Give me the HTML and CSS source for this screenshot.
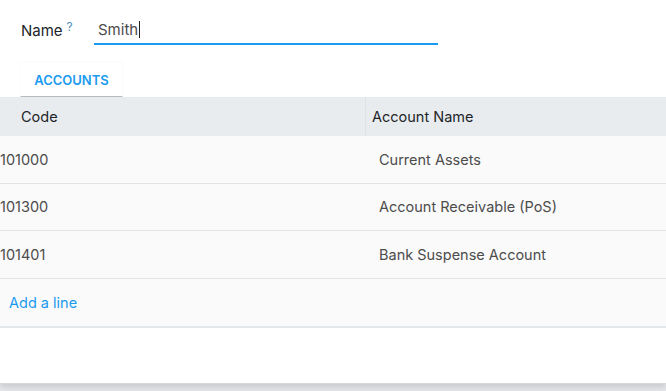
FILE: index.html
```html
<!DOCTYPE html>
<html lang="en">
<head>
    <meta charset="UTF-8">
    <title>Account Group</title>
    <link rel="stylesheet" href="styles.css">
</head>
<body>

<div class="sheet">
    <div class="field-row">
        <label class="field-label">Name<sup class="help">?</sup></label>
        <div class="field-input">Smith<span class="caret"></span></div>
    </div>

    <div class="tabs">
        <div class="tab active">ACCOUNTS</div>
    </div>

    <div class="list">
        <div class="list-row list-head">
            <div class="cell code">Code</div>
            <div class="cell name">Account Name</div>
        </div>
        <div class="list-row">
            <div class="cell code">101000</div>
            <div class="cell name">Current Assets</div>
        </div>
        <div class="list-row">
            <div class="cell code">101300</div>
            <div class="cell name">Account Receivable (PoS)</div>
        </div>
        <div class="list-row">
            <div class="cell code">101401</div>
            <div class="cell name">Bank Suspense Account</div>
        </div>
        <div class="list-row add-row">
            <a class="add-line" href="#">Add a line</a>
        </div>
    </div>
</div>

</body>
</html>
```

FILE: styles.css
```css
* {
    box-sizing: border-box;
}

body, html {
    margin: 0;
    background-color: #e4e6e9;
    font-family: "Inter", "Roboto", sans-serif;
    font-size: 14.5px;
    color: #4c4c4c;
}

body {
    height: 391px;
    overflow: hidden;
}

.sheet {
    background-color: white;
    width: 666px;
    height: 384px;
    box-shadow: 0 3px 6px rgba(0, 0, 0, 0.12);
    border-bottom: 1px solid #d6d8db;
}

.field-row {
    display: flex;
    align-items: flex-end;
    padding: 20px 0 0 21px;
    height: 45px;
}

.field-label {
    width: 73px;
    font-size: 15px;
    color: #212529;
    padding-bottom: 5px;
}

.help {
    color: #4f8fbd;
    font-size: 12px;
    margin-left: 4px;
    vertical-align: 5px;
}

.field-input {
    width: 344px;
    border-bottom: 2px solid #1a9bef;
    padding: 0 0 4px 4px;
    font-size: 15px;
    color: #4c4c4c;
    display: flex;
    align-items: center;
}

.caret {
    display: inline-block;
    width: 1px;
    height: 17px;
    background-color: #222;
    margin-left: 1px;
}

.tabs {
    display: flex;
    padding-left: 20px;
    margin-top: 16px;
}

.tab {
    width: 103px;
    height: 36px;
    border: 1px solid #fbfbfb;
    border-bottom: 1px solid #b9b9b9;
    text-align: center;
    padding-top: 10px;
    font-size: 13px;
    font-weight: 600;
    color: #1a9bef;
}

.list {
    border-bottom: 2px solid #e4e7ea;
}

.list-row {
    display: flex;
    height: 47.5px;
    align-items: center;
    background-color: #fafafa;
    border-bottom: 1px solid #e3e3e3;
}

.list-head {
    height: 39px;
    background-color: #e9ecef;
    border-bottom: 0;
    color: #212529;
}

.cell.code {
    width: 366px;
    padding-left: 0;
}

.cell.name {
    padding-left: 13px;
}

.list-head .cell {
    height: 100%;
    display: flex;
    align-items: center;
}

.list-head .cell.code {
    padding-left: 21px;
    border-right: 1px solid #dfe2e5;
}

.list-head .cell.name {
    padding-left: 6px;
}

.add-row {
    border-bottom: 0;
}

.add-line {
    color: #1a9bef;
    text-decoration: none;
    padding-left: 9px;
}
```
